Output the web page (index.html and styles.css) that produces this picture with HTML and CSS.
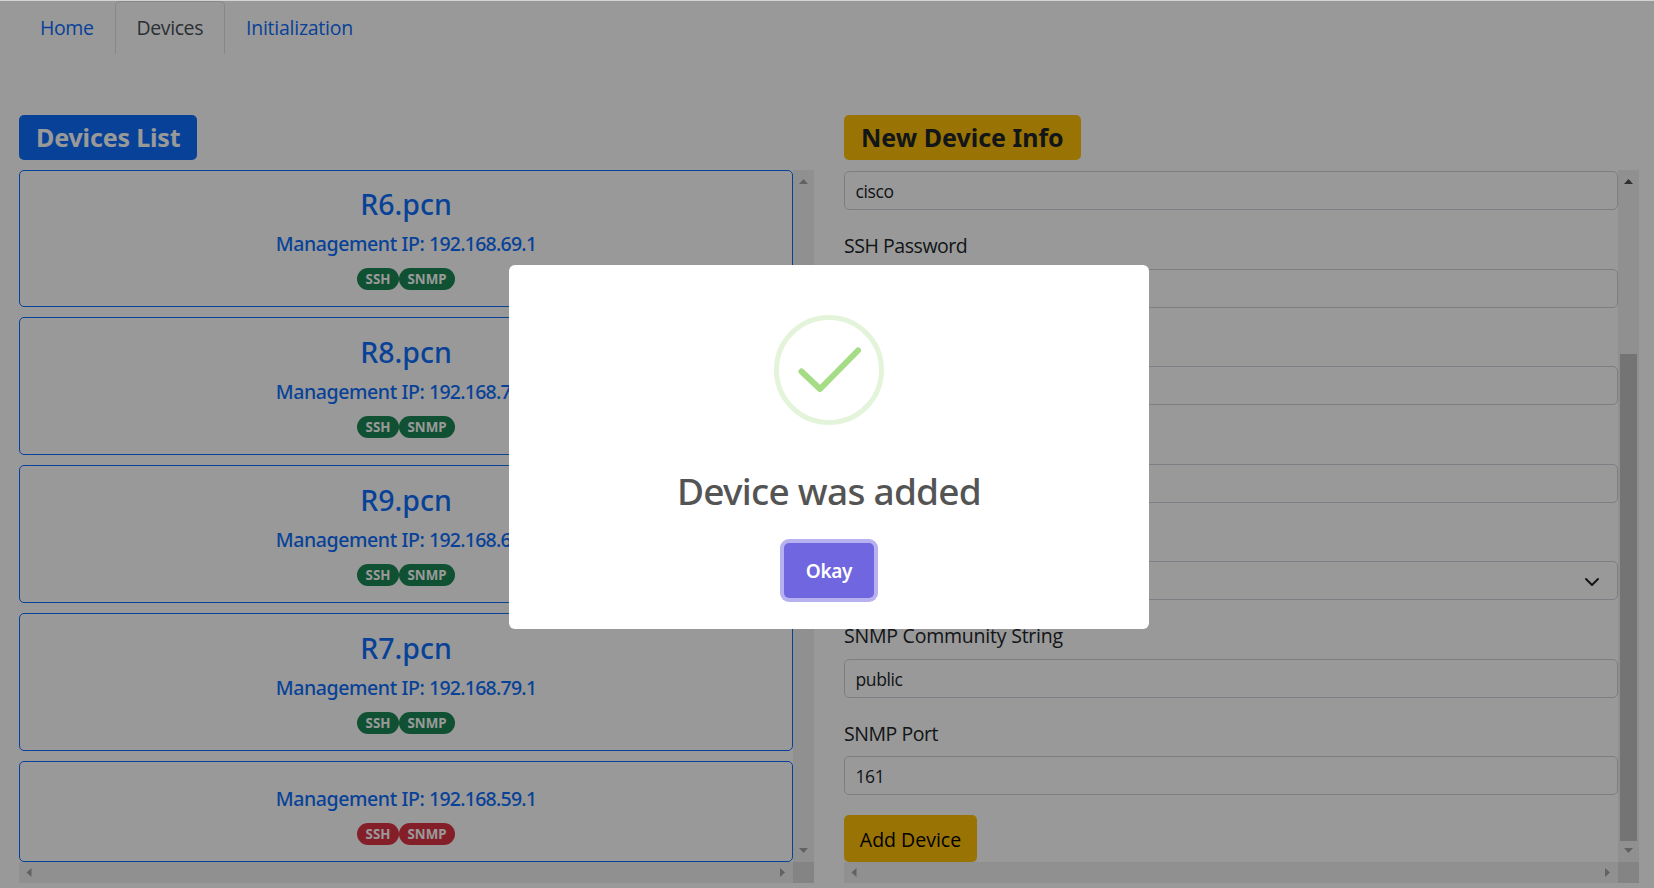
FILE: index.html
```
<!DOCTYPE html>
<html lang="en">
<head>
<meta charset="utf-8">
<title>Devices</title>
<link rel="stylesheet" href="styles.css">
</head>
<body>
<nav class="tabs">
  <a class="tab tab-home">Home</a>
  <a class="tab tab-active">Devices</a>
  <a class="tab tab-init">Initialization</a>
</nav>
<main class="panels">
  <section class="panel">
    <h2 class="title title-blue">Devices List</h2>
    <div class="scroller">
      <div class="cards">
        <article class="card"><h3 class="name">R6.pcn</h3><p class="ip">Management IP: <span class="addr">192.168.69.1</span></p><div class="badges"><span class="badge ssh">SSH</span><span class="badge snmp">SNMP</span></div></article>
        <article class="card"><h3 class="name">R8.pcn</h3><p class="ip">Management IP: <span class="addr">192.168.78.1</span></p><div class="badges"><span class="badge ssh">SSH</span><span class="badge snmp">SNMP</span></div></article>
        <article class="card"><h3 class="name">R9.pcn</h3><p class="ip">Management IP: <span class="addr">192.168.68.1</span></p><div class="badges"><span class="badge ssh">SSH</span><span class="badge snmp">SNMP</span></div></article>
        <article class="card"><h3 class="name">R7.pcn</h3><p class="ip">Management IP: <span class="addr">192.168.79.1</span></p><div class="badges"><span class="badge ssh">SSH</span><span class="badge snmp">SNMP</span></div></article>
        <article class="card card-down"><p class="ip">Management IP: <span class="addr">192.168.59.1</span></p><div class="badges"><span class="badge ssh">SSH</span><span class="badge snmp">SNMP</span></div></article>
      </div>
      <div class="bar bar-v">
        <svg class="arrow" viewBox="0 0 21 21"><path d="M6 14h9l-4.500-5z"/></svg>
        <svg class="arrow" viewBox="0 0 21 21"><path d="M6 7h9l-4.500 5z"/></svg>
      </div>
      <div class="bar bar-h">
        <svg class="arrow" viewBox="0 0 21 21"><path d="M12.500 6v9l-5-4.500z"/></svg>
        <svg class="arrow" viewBox="0 0 21 21"><path d="M8 6v9l5-4.500z"/></svg>
      </div>
      <div class="corner"></div>
    </div>
  </section>
  <section class="panel">
    <h2 class="title title-yellow">New Device Info</h2>
    <div class="scroller">
      <form class="form">
        <div class="input">cisco</div>
        <label class="label">SSH Password</label>
        <div class="input"></div>
        <label class="label"></label>
        <div class="input"></div>
        <label class="label"></label>
        <div class="input"></div>
        <label class="label"></label>
        <div class="input select"><svg class="chevron" viewBox="0 0 16 16"><path d="m2 5 6 6 6-6"/></svg></div>
        <label class="label label-long">SNMP Community String</label>
        <div class="input">public</div>
        <label class="label">SNMP Port</label>
        <div class="input">161</div>
        <button class="add" type="button">Add Device</button>
      </form>
      <div class="bar bar-v">
        <svg class="arrow arrow-on" viewBox="0 0 21 21"><path d="M6 14h9l-4.500-5z"/></svg>
        <div class="thumb"></div>
        <svg class="arrow" viewBox="0 0 21 21"><path d="M6 7h9l-4.500 5z"/></svg>
      </div>
      <div class="bar bar-h">
        <svg class="arrow" viewBox="0 0 21 21"><path d="M12.500 6v9l-5-4.500z"/></svg>
        <svg class="arrow" viewBox="0 0 21 21"><path d="M8 6v9l5-4.500z"/></svg>
      </div>
      <div class="corner"></div>
    </div>
  </section>
</main>
<div class="backdrop">
  <div class="modal">
    <svg class="success" viewBox="0 0 110 110"><circle cx="55" cy="55" r="52.500"/><path d="M27.500 56.500 46 74 84 35.500"/></svg>
    <h2 class="message">Device was added</h2>
    <button class="okay" type="button">Okay</button>
  </div>
</div>
</body>
</html>
```
FILE: styles.css
```
* { box-sizing: border-box; margin: 0; }

body {
  height: 888px;
  overflow: hidden;
  border-top: 1px solid #d4d4d4;
  background: #fff;
  color: #212529;
  font: 400 19.5px/30px "Open Sans", "Noto Sans", sans-serif;
}

/* Navigation */
.tabs { display: flex; height: 53px; padding-left: 19px; line-height: 53px; }
.tab { color: #0d6efd; letter-spacing: -.4px; }
.tab-home { width: 96px; padding-left: 21px; }
.tab-active {
  width: 110px;
  padding-left: 20.5px;
  border: 1px solid #dee2e6;
  border-bottom: 0;
  border-radius: 5px 5px 0 0;
  color: #495057;
  line-height: 51px;
}
.tab-init { padding-left: 21px; letter-spacing: -.25px; }

/* Panels */
.panels { display: grid; grid-template-columns: 795px 795px; gap: 30px; padding: 61px 0 0 19px; }
.title {
  height: 45px;
  margin-bottom: 10px;
  padding-left: 17px;
  border-radius: 5px;
  font: 700 25px/44px "Noto Sans", sans-serif;
  white-space: nowrap;
}
.title-blue { width: 178px; background: #0d6efd; color: #fff; letter-spacing: -.15px; }
.title-yellow { width: 237px; background: #ffc107; }
.scroller { display: grid; grid-template: 692px 21px / 774px 21px; }

/* Device cards */
.cards { display: grid; grid-template-rows: 137px 138px 138px 138px 101px; gap: 10px; }
.card {
  display: flex;
  flex-direction: column;
  align-items: center;
  justify-content: flex-end;
  padding-bottom: 16px;
  border: 1px solid #0d6efd;
  border-radius: 5px;
  color: #0d6efd;
}
.name { margin-bottom: 10px; font: 500 28.5px/36px "Noto Sans", sans-serif; }
.ip { margin-bottom: 12px; font: 500 19.5px/24px "Noto Sans", sans-serif; letter-spacing: -.4px; }
.addr { letter-spacing: -.75px; }
.badges { display: flex; }
.badge {
  height: 22px;
  border-radius: 11px;
  background: #198754;
  color: #fff;
  font: 700 13.3px/22px "Noto Sans", sans-serif;
  text-align: center;
}
.ssh { width: 42px; }
.snmp { width: 56px; }
.card-down .badge { background: #dc3545; }

/* Form */
.form { display: flex; flex-direction: column; align-items: stretch; padding-top: 1px; }
.input {
  flex: none;
  height: 39px;
  padding-left: 10.5px;
  border: 1px solid #ced4da;
  border-radius: 5px;
  font-size: 17.5px;
  line-height: 38px;
  letter-spacing: -.4px;
}
.label { height: 30px; margin: 20px 0 8.5px; line-height: 32px; letter-spacing: -.45px; }
.label-long { letter-spacing: -.22px; }
.select { display: flex; align-items: center; justify-content: flex-end; padding: 2px 17px 0 0; }
.chevron { width: 16px; height: 16px; fill: none; stroke: #212529; stroke-width: 2; stroke-linecap: round; stroke-linejoin: round; }
.add {
  width: 133px;
  height: 47px;
  margin-top: 20px;
  padding: 2px 0 0;
  border: 0;
  border-radius: 5px;
  background: #ffc107;
  color: #000;
  font: inherit;
}

/* Scrollbars */
.bar { display: flex; justify-content: space-between; background: #f1f1f1; }
.bar-v { flex-direction: column; align-items: center; }
.arrow { flex: none; width: 21px; height: 21px; fill: #a3a3a3; }
.arrow-on { fill: #505050; }
.thumb { width: 17px; height: 487px; margin-top: 163px; background: #c1c1c1; }
.corner { background: #dcdcdc; }

/* Dialog */
.backdrop {
  position: fixed;
  inset: 1px 0 0;
  display: flex;
  align-items: center;
  justify-content: center;
  padding: 5px 0 0 4px;
  background: rgba(0, 0, 0, .4);
}
.modal {
  display: flex;
  flex-direction: column;
  align-items: center;
  width: 640px;
  height: 364px;
  padding-top: 50px;
  border-radius: 6px;
  background: #fff;
}
.success { width: 110px; height: 110px; fill: none; stroke: #a5dc86; stroke-width: 6; stroke-linecap: round; stroke-linejoin: round; }
.success circle { stroke: #e4f4db; stroke-width: 5; }
.message { margin: 41px 0 27px; color: #545454; font: 500 37px/50px "Noto Sans", sans-serif; letter-spacing: -.75px; }
.okay {
  width: 90px;
  height: 55px;
  padding: 2px 0 0;
  border: 0;
  border-radius: 5px;
  background: #7066e0;
  box-shadow: 0 0 0 4px #b7b2ef;
  color: #fff;
  font: 600 19px/53px "Noto Sans", sans-serif;
  letter-spacing: -.3px;
}
```
